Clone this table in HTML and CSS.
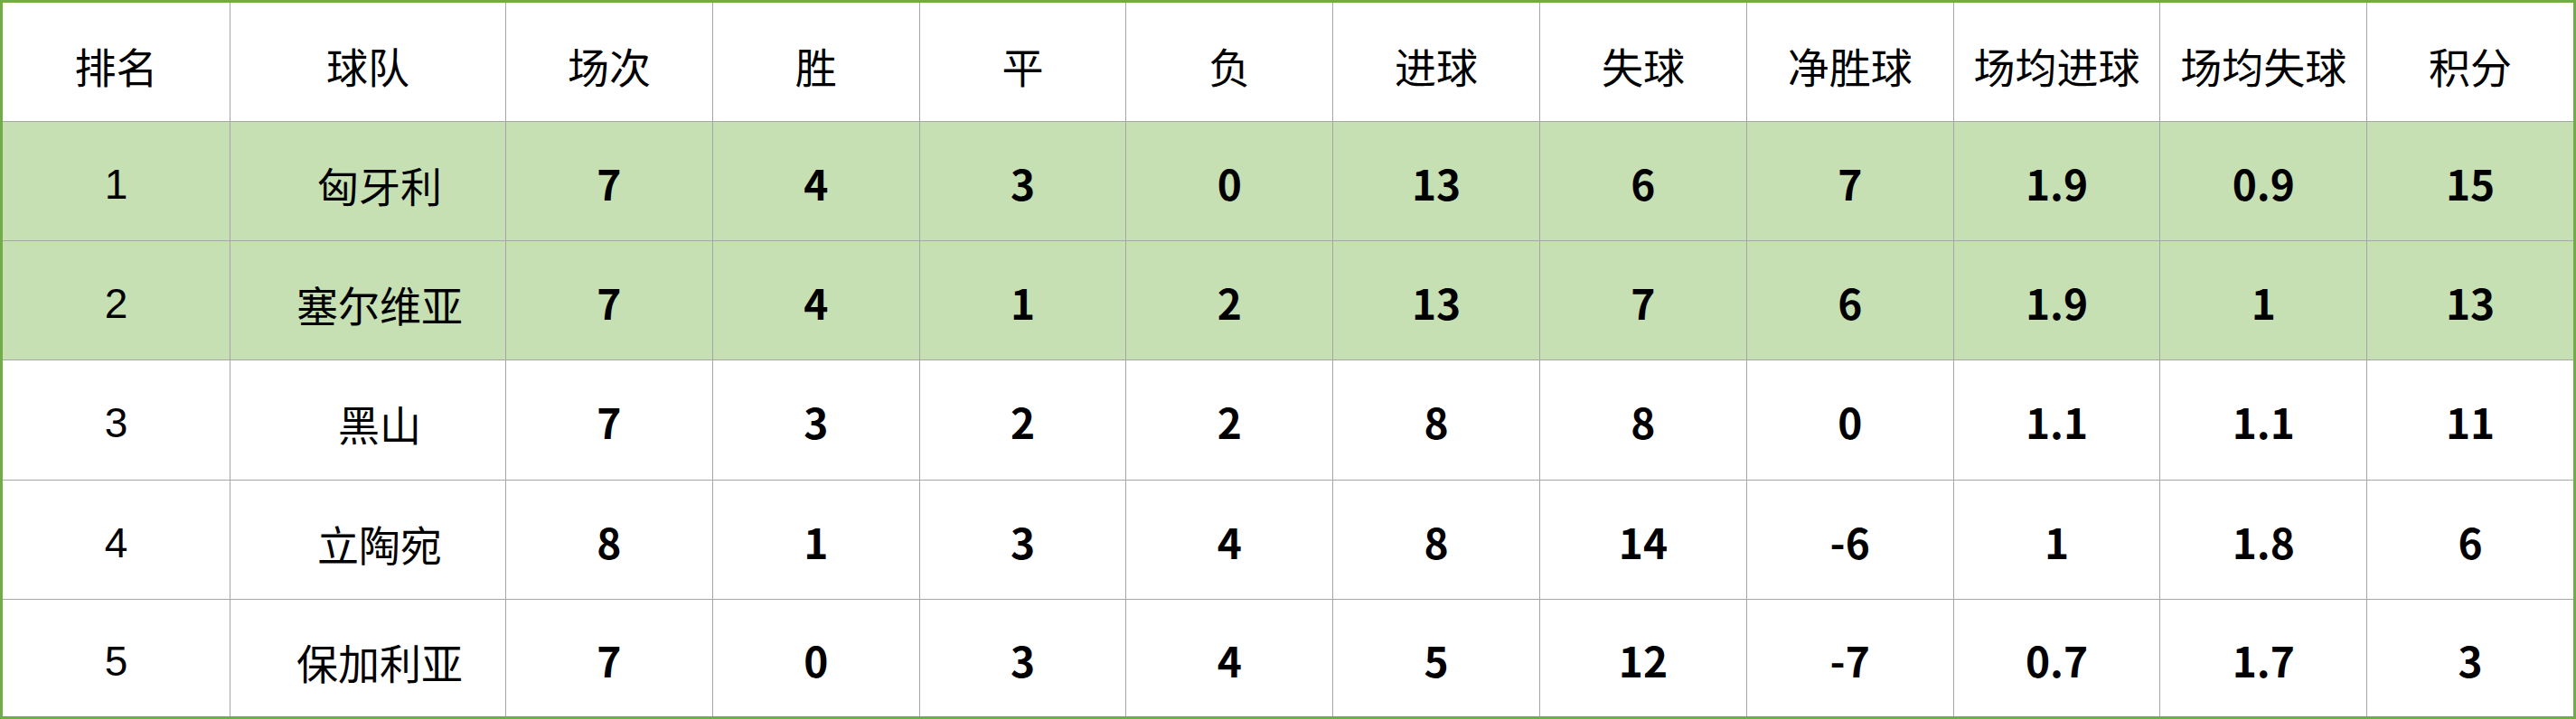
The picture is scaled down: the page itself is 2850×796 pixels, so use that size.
FILE: index.html
```html
<!DOCTYPE html>
<html lang="zh-CN">
<head>
<meta charset="utf-8">
<title>积分榜</title>
<link rel="stylesheet" href="styles.css">
</head>
<body>
<div class="table">
  <div class="cell head">排名</div>
  <div class="cell head">球队</div>
  <div class="cell head">场次</div>
  <div class="cell head">胜</div>
  <div class="cell head">平</div>
  <div class="cell head">负</div>
  <div class="cell head">进球</div>
  <div class="cell head">失球</div>
  <div class="cell head">净胜球</div>
  <div class="cell head">场均进球</div>
  <div class="cell head">场均失球</div>
  <div class="cell head">积分</div>

  <div class="cell rank hl">1</div>
  <div class="cell team hl">匈牙利</div>
  <div class="cell num hl">7</div>
  <div class="cell num hl">4</div>
  <div class="cell num hl">3</div>
  <div class="cell num hl">0</div>
  <div class="cell num hl">13</div>
  <div class="cell num hl">6</div>
  <div class="cell num hl">7</div>
  <div class="cell num hl">1.9</div>
  <div class="cell num hl">0.9</div>
  <div class="cell num hl">15</div>

  <div class="cell rank hl">2</div>
  <div class="cell team hl">塞尔维亚</div>
  <div class="cell num hl">7</div>
  <div class="cell num hl">4</div>
  <div class="cell num hl">1</div>
  <div class="cell num hl">2</div>
  <div class="cell num hl">13</div>
  <div class="cell num hl">7</div>
  <div class="cell num hl">6</div>
  <div class="cell num hl">1.9</div>
  <div class="cell num hl">1</div>
  <div class="cell num hl">13</div>

  <div class="cell rank">3</div>
  <div class="cell team">黑山</div>
  <div class="cell num">7</div>
  <div class="cell num">3</div>
  <div class="cell num">2</div>
  <div class="cell num">2</div>
  <div class="cell num">8</div>
  <div class="cell num">8</div>
  <div class="cell num">0</div>
  <div class="cell num">1.1</div>
  <div class="cell num">1.1</div>
  <div class="cell num">11</div>

  <div class="cell rank">4</div>
  <div class="cell team">立陶宛</div>
  <div class="cell num">8</div>
  <div class="cell num">1</div>
  <div class="cell num">3</div>
  <div class="cell num">4</div>
  <div class="cell num">8</div>
  <div class="cell num">14</div>
  <div class="cell num">-6</div>
  <div class="cell num">1</div>
  <div class="cell num">1.8</div>
  <div class="cell num">6</div>

  <div class="cell rank">5</div>
  <div class="cell team">保加利亚</div>
  <div class="cell num">7</div>
  <div class="cell num">0</div>
  <div class="cell num">3</div>
  <div class="cell num">4</div>
  <div class="cell num">5</div>
  <div class="cell num">12</div>
  <div class="cell num">-7</div>
  <div class="cell num">0.7</div>
  <div class="cell num">1.7</div>
  <div class="cell num">3</div>
</div>
</body>
</html>
```
FILE: styles.css
```css
html, body {
  margin: 0;
  padding: 0;
  background: #ffffff;
}

.table {
  box-sizing: border-box;
  width: 2850px;
  height: 796px;
  border: 3px solid #70ad47;
  background: #a6a6a6;
  display: grid;
  grid-template-columns: 251px 304px repeat(10, 1fr);
  grid-template-rows: 131px 131px 131px 132px 131px 1fr;
  gap: 1px;
  font-family: "Noto Sans CJK SC", "Noto Sans", sans-serif;
  color: #000000;
}

.cell {
  background: #ffffff;
  display: flex;
  align-items: center;
  justify-content: center;
  font-size: 46px;
  line-height: 1;
  white-space: nowrap;
}

.cell.hl {
  background: #c6e0b4;
}

.head {
  font-weight: 400;
  padding-top: 6px;
}

.rank {
  font-family: "Liberation Sans", "Noto Sans", sans-serif;
  font-size: 46px;
  padding-top: 6px;
}

.team {
  font-weight: 400;
  padding-left: 26px;
  padding-top: 6px;
}

.num {
  font-weight: 700;
  padding-top: 2px;
}
```
